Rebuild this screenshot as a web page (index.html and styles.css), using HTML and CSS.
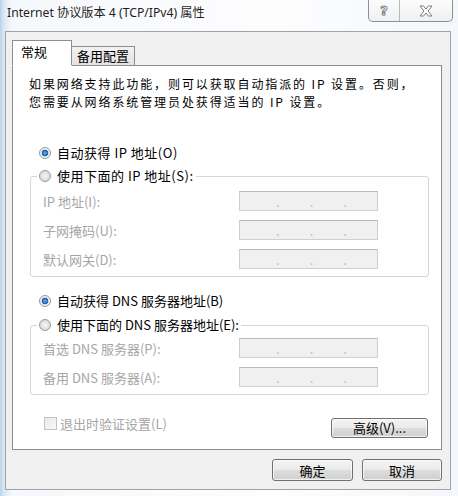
FILE: index.html
```html
<!DOCTYPE html>
<html lang="zh-CN">
<head>
    <meta charset="UTF-8">
    <title>Internet 协议版本 4 (TCP/IPv4) 属性</title>
    <link rel="stylesheet" href="styles.css">
</head>
<body>
    <div class="window">
        <div class="titlebar">
            <span class="title">Internet 协议版本 4 (TCP/IPv4) 属性</span>
            <div class="caption-btns">
                <span class="cap-btn help">?</span>
                <span class="cap-btn close">
                    <svg width="14" height="12" viewBox="0 0 14 12">
                        <path d="M1 1 H4.6 L7 4 L9.4 1 H13 L9.1 6 L13 11 H9.4 L7 8 L4.6 11 H1 L4.9 6 Z" fill="#fff" stroke="#7d7d7d" stroke-width="1" stroke-linejoin="round"/>
                    </svg>
                </span>
            </div>
        </div>

        <div class="client">
            <div class="tabs">
                <span class="tab active">常规</span>
                <span class="tab">备用配置</span>
            </div>

            <div class="panel">
                <p class="intro">如果网络支持此功能，则可以获取自动指派的 IP 设置。否则，<br>您需要从网络系统管理员处获得适当的 IP 设置。</p>

                <div class="radio-row first"><span class="radio checked"></span>自动获得 IP 地址(O)</div>
                <fieldset class="group ip-group">
                    <legend><span class="radio-row"><span class="radio"></span>使用下面的 IP 地址(S):</span></legend>
                    <div class="field-grid">
                        <span class="field-label">IP 地址(I):</span>
                        <span class="ip-box"><i>.</i><i>.</i><i>.</i></span>
                        <span class="field-label">子网掩码(U):</span>
                        <span class="ip-box"><i>.</i><i>.</i><i>.</i></span>
                        <span class="field-label">默认网关(D):</span>
                        <span class="ip-box"><i>.</i><i>.</i><i>.</i></span>
                    </div>
                </fieldset>

                <div class="radio-row dns-auto"><span class="radio checked"></span>自动获得 DNS 服务器地址(B)</div>
                <fieldset class="group dns-group">
                    <legend><span class="radio-row"><span class="radio"></span>使用下面的 DNS 服务器地址(E):</span></legend>
                    <div class="field-grid">
                        <span class="field-label">首选 DNS 服务器(P):</span>
                        <span class="ip-box"><i>.</i><i>.</i><i>.</i></span>
                        <span class="field-label">备用 DNS 服务器(A):</span>
                        <span class="ip-box"><i>.</i><i>.</i><i>.</i></span>
                    </div>
                </fieldset>

                <div class="options-row">
                    <span class="check-label"><span class="checkbox"></span>退出时验证设置(L)</span>
                    <button class="btn advanced">高级(V)...</button>
                </div>
            </div>

            <div class="dialog-buttons">
                <button class="btn ok">确定</button>
                <button class="btn cancel">取消</button>
            </div>
        </div>
    </div>
</body>
</html>
```

FILE: styles.css
```css
body {
    margin: 0;
    width: 458px;
    height: 496px;
    overflow: hidden;
    font-family: "Noto Sans CJK SC", sans-serif;
    font-size: 13px;
    color: #000;
    background: linear-gradient(90deg, #b9d2ea 0, #dbe7f4 4px, #f5f8fc 12px, #fdfdfe 60%, #f4f7fb 100%);
}

.window {
    display: flex;
    flex-direction: column;
    height: 496px;
}

/* title bar */
.titlebar {
    display: flex;
    align-items: flex-start;
    height: 31px;
}

.title {
    padding-left: 7px;
    line-height: 26px;
    font-family: "Noto Sans", "Noto Sans CJK SC", sans-serif;
    font-size: 12.2px;
    color: #1e1e1e;
    text-shadow: 0 0 8px #fff, 0 0 4px #fff;
}

.caption-btns {
    margin-left: auto;
    margin-right: 5px;
    display: flex;
    height: 21px;
    border: 1px solid #8f8f8f;
    border-top: none;
    border-radius: 0 0 5px 5px;
    background: linear-gradient(#fcfcfc, #eef0f2);
}

.cap-btn {
    display: flex;
    align-items: center;
    justify-content: center;
}

.cap-btn.help {
    width: 30px;
    border-right: 1px solid #b8b8b8;
    font-family: "DejaVu Sans", sans-serif;
    font-size: 13px;
    font-weight: bold;
    color: #fff;
    -webkit-text-stroke: 1px #7d7d7d;
}

.cap-btn.close {
    width: 52px;
}

/* dialog body */
.client {
    flex: 1;
    margin: 0 7px 6px 5px;
    padding: 8px 8px 0 6px;
    border: 1px solid #a3a3a3;
    background: #f0f0f0;
    display: flex;
    flex-direction: column;
}

.tabs {
    display: flex;
    align-items: flex-end;
}

.tab {
    height: 18px;
    padding: 0 5px;
    line-height: 18px;
    border: 1px solid #8c8e94;
    border-left: none;
    background: linear-gradient(#f2f2f2, #e3e3e3);
}

.tab.active {
    position: relative;
    z-index: 1;
    height: 24px;
    width: 44px;
    padding: 0 6px 0 8px;
    line-height: 22px;
    border-left: 1px solid #8c8e94;
    border-bottom-color: #fff;
    background: #fff;
}

.panel {
    height: 374px;
    margin-top: -1px;
    padding: 9px 12px 0 16px;
    border: 1px solid #898c95;
    background: #fff;
}

.intro {
    margin: 0;
    font-size: 12px;
    line-height: 18px;
    letter-spacing: 1.9px;
}

.radio-row {
    display: flex;
    align-items: center;
    height: 16px;
    line-height: 16px;
}

.radio-row.first {
    margin: 34px 0 0 10px;
    letter-spacing: 0.5px;
}

.radio-row.dns-auto {
    margin: 16px 0 0 10px;
}

.radio {
    width: 12px;
    height: 12px;
    margin-right: 6px;
    box-sizing: border-box;
    border-radius: 50%;
    border: 1px solid #9a9a9a;
    background: radial-gradient(circle, #f6f6f6 0, #e6e6e6 3px, #d9d9d9 5px);
}

.radio.checked {
    background: radial-gradient(circle, #6ab2ef 0, #2f79c4 2px, #1f5c9c 3px, #d9e6f2 3.6px, #f2f2f2 5px);
}

.group {
    margin: 7px 0 0 1px;
    padding: 6px 0 7px 12px;
    border: 1px solid #d6d6d6;
    border-radius: 3px;
}

.ip-group legend .radio-row {
    letter-spacing: 0.5px;
}

.dns-group {
    margin-top: 8px;
    padding-top: 4px;
}

.group legend {
    margin-left: -6px;
    padding: 0 2px;
}

.field-grid {
    display: grid;
    grid-template-columns: 196px 139px;
    row-gap: 8px;
    align-items: center;
}

.field-label {
    color: #a6a6a6;
    padding-top: 2px;
}

.ip-box {
    display: flex;
    height: 20px;
    padding-left: 36px;
    box-sizing: border-box;
    border: 1px solid #cfcfcf;
    border-top-color: #b9b9b9;
    background: #f0f0f0;
    line-height: 20px;
}

.ip-box i {
    width: 35px;
    font-style: normal;
    color: #b9b9b9;
}

.options-row {
    display: flex;
    justify-content: space-between;
    align-items: flex-start;
    margin-top: 21px;
}

.check-label {
    display: flex;
    align-items: center;
    height: 14px;
    margin-left: 15px;
    color: #a6a6a6;
}

.checkbox {
    width: 13px;
    height: 13px;
    margin-right: 3px;
    box-sizing: border-box;
    border: 1px solid #c2c2c2;
    background: linear-gradient(135deg, #e9e9e9, #f8f8f8);
}

.btn {
    height: 21px;
    padding: 0;
    font-family: "Noto Sans CJK SC", sans-serif;
    font-size: 13px;
    color: #000;
    border: 1px solid #707070;
    border-radius: 3px;
    background: linear-gradient(#f3f3f3 0%, #ebebeb 48%, #dddddd 52%, #d0d0d0 100%);
    box-shadow: inset 0 0 0 1px rgba(255, 255, 255, 0.7);
}

.btn.advanced {
    width: 97px;
    height: 20px;
    margin: 2px 1px 0 0;
    line-height: 16px;
}

.dialog-buttons {
    display: flex;
    justify-content: flex-end;
    gap: 9px;
    margin-top: 9px;
}

.btn.ok {
    width: 81px;
    height: 22px;
}

.btn.cancel {
    width: 80px;
    height: 22px;
}
```
